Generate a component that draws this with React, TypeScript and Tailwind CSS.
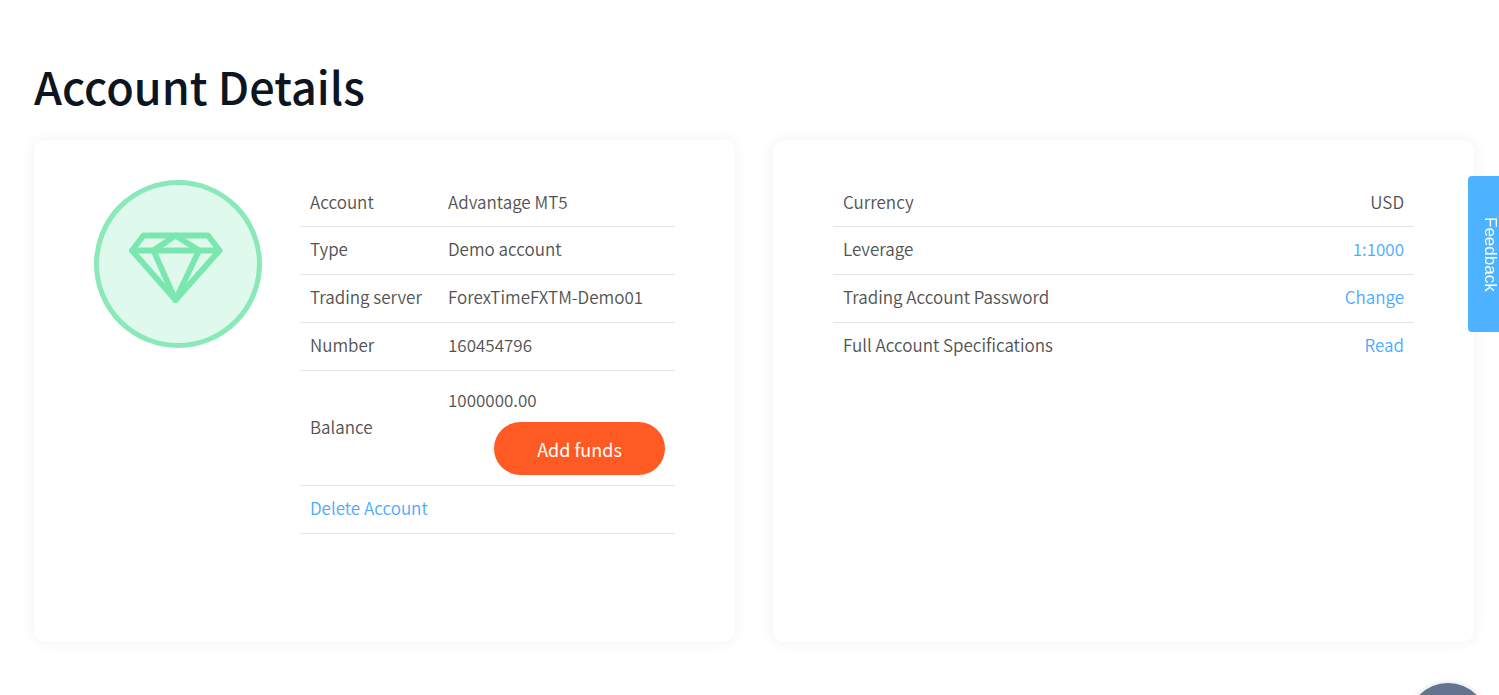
import React from 'react';

interface DetailRow {
  label: string;
  value: string;
  action?: 'link';
}

const accountRows: DetailRow[] = [
  { label: 'Account', value: 'Advantage MT5' },
  { label: 'Type', value: 'Demo account' },
  { label: 'Trading server', value: 'ForexTimeFXTM-Demo01' },
  { label: 'Number', value: '160454796' }
];

const settingRows: DetailRow[] = [
  { label: 'Currency', value: 'USD' },
  { label: 'Leverage', value: '1:1000', action: 'link' },
  { label: 'Trading Account Password', value: 'Change', action: 'link' },
  { label: 'Full Account Specifications', value: 'Read', action: 'link' }
];

const cardClasses = 'min-h-[502px] rounded-xl bg-white px-[60px] pt-10 pb-16 shadow-[0_0_16px_rgba(0,0,0,0.06)]';
const cellClasses = 'px-[10px] pt-[10px] pb-[14px] font-[350] [tr:first-child>&]:pb-[13px]';

const DiamondBadge: React.FC = () => (
  <svg className="size-[168px] shrink-0" viewBox="0 0 168 168" fill="none" aria-hidden="true">
    <circle cx="84" cy="84" r="81.5" fill="#dffaec" stroke="#8ae8b9" strokeWidth="5" />
    <g stroke="#7ae6b0" strokeWidth="5.8" strokeLinejoin="round" strokeLinecap="round">
      <path d="M49.5 55.5H114L125.5 70.5L81.5 120L38 70.5Z" />
      <path d="M38 70.5H125.5" />
      <path d="M59.5 70.5L81.5 55.5L105 70.5L81.5 120Z" />
    </g>
  </svg>
);

const App: React.FC = () => {
  return (
    <div className="overflow-hidden bg-white pt-14 pr-[25px] pb-[53px] pl-[34px] font-['Noto_Sans_CJK_SC',sans-serif] text-[17px] leading-[23px] font-[350] text-[#525252]">
      <h1 className="mb-6 text-[45px] leading-[60px] font-medium text-[#0d1520]">Account Details</h1>

      <div className="grid grid-cols-2 gap-[38px]">
        {/* Account summary */}
        <section className={`${cardClasses} flex items-start gap-[38px]`}>
          <DiamondBadge />
          <table className="min-w-0 flex-1 border-collapse">
            <tbody>
              {accountRows.map((row) => (
                <tr key={row.label} className="border-b border-[#e5e5e5]">
                  <th scope="row" className={`${cellClasses} w-[138px] text-left whitespace-nowrap`}>{row.label}</th>
                  <td className={cellClasses}>{row.value}</td>
                </tr>
              ))}
              <tr className="border-b border-[#e5e5e5]">
                <th scope="row" className={`${cellClasses} text-left`}>Balance</th>
                <td className="px-[10px] pt-[17px] pb-[10px]">
                  <div>1000000.00</div>
                  <div className="mt-[11px] flex justify-end">
                    <button type="button" className="h-[53px] w-[171px] rounded-full bg-[#ff5a23] text-lg font-normal text-white">
                      Add funds
                    </button>
                  </div>
                </td>
              </tr>
              <tr className="border-b border-[#e5e5e5]">
                <td colSpan={2} className={cellClasses}>
                  <a href="#delete" className="text-[#4babff]">Delete Account</a>
                </td>
              </tr>
            </tbody>
          </table>
        </section>

        {/* Account settings */}
        <section className={cardClasses}>
          <table className="w-full border-collapse">
            <tbody>
              {settingRows.map((row) => (
                <tr key={row.label} className="border-b border-[#e5e5e5] last:border-b-0">
                  <th scope="row" className={`${cellClasses} text-left`}>{row.label}</th>
                  <td className={`${cellClasses} text-right`}>
                    {row.action ? <a href="#settings" className="text-[#4babff]">{row.value}</a> : row.value}
                  </td>
                </tr>
              ))}
            </tbody>
          </table>
        </section>
      </div>

      {/* Floating controls */}
      <button
        type="button"
        className="fixed top-44 right-0 flex h-[156px] w-[31px] items-center justify-center rounded-l bg-[#4db2ff] pl-3 font-['Liberation_Sans',sans-serif] text-[17px] leading-5 font-normal text-white [writing-mode:vertical-rl]"
      >
        Feedback
      </button>
      <button
        type="button"
        aria-label="Open chat"
        className="fixed right-[11px] -bottom-[68px] size-20 rounded-full bg-[#64748f] shadow-[0_1px_6px_rgba(0,0,0,0.2)]"
      />
    </div>
  );
};

export default App;
